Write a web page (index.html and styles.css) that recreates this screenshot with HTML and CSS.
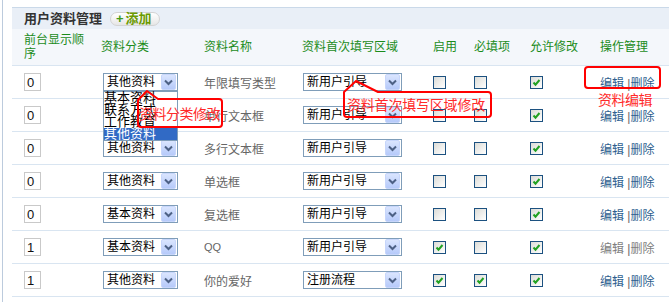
FILE: index.html
```html
<!DOCTYPE html>
<html lang="zh-CN">
<head>
<meta charset="UTF-8" />
<title>用户资料管理</title>
<link rel="stylesheet" href="styles.css">
</head>
<body>
<div class="page">
  <div class="panel">
    <div class="panel-head">
      <span class="panel-title">用户资料管理</span>
      <a class="btn-add" href="#"><span class="plus">+</span>添加</a>
    </div>
    <table class="grid">
      <colgroup>
        <col style="width:89px"><col style="width:103px"><col style="width:98px"><col style="width:131px">
        <col style="width:41px"><col style="width:56px"><col style="width:70px"><col style="width:69px">
      </colgroup>
      <thead>
        <tr>
          <th class="c-ord">前台显示顺序</th>
          <th>资料分类</th>
          <th>资料名称</th>
          <th>资料首次填写区域</th>
          <th>启用</th>
          <th>必填项</th>
          <th>允许修改</th>
          <th>操作管理</th>
        </tr>
      </thead>
      <tbody>
        <tr>
          <td class="c-ord"><input class="ord" type="text" value="0"></td>
          <td>
            <span class="sel sel-cat open">
              <span class="sel-text">其他资料</span>
              <span class="sel-btn"><svg width="15" height="16" viewBox="0 0 15 16"><path d="M4 6.5l3.5 3.5 3.5-3.5" /></svg></span>
              <ul class="drop">
                <li>基本资料</li>
                <li>联系方式</li>
                <li>工作教育</li>
                <li class="cur">其他资料</li>
              </ul>
            </span>
          </td>
          <td class="name">年限填写类型</td>
          <td><span class="sel sel-area"><span class="sel-text">新用户引导</span><span class="sel-btn"><svg width="15" height="16" viewBox="0 0 15 16"><path d="M4 6.5l3.5 3.5 3.5-3.5" /></svg></span></span></td>
          <td><span class="cb"></span></td>
          <td><span class="cb"></span></td>
          <td><span class="cb"><svg width="11" height="11" viewBox="0 0 11 11"><path d="M2.5 5.5l2 2.2 4-4.7" /></svg></span></td>
          <td class="ops"><a href="#">编辑</a> |<a href="#">删除</a></td>
        </tr>
        <tr>
          <td class="c-ord"><input class="ord" type="text" value="0"></td>
          <td><span class="sel sel-cat"><span class="sel-text">其他资料</span><span class="sel-btn"><svg width="15" height="16" viewBox="0 0 15 16"><path d="M4 6.5l3.5 3.5 3.5-3.5" /></svg></span></span></td>
          <td class="name">单行文本框</td>
          <td><span class="sel sel-area"><span class="sel-text">新用户引导</span><span class="sel-btn"><svg width="15" height="16" viewBox="0 0 15 16"><path d="M4 6.5l3.5 3.5 3.5-3.5" /></svg></span></span></td>
          <td><span class="cb"></span></td>
          <td><span class="cb"></span></td>
          <td><span class="cb"><svg width="11" height="11" viewBox="0 0 11 11"><path d="M2.5 5.5l2 2.2 4-4.7" /></svg></span></td>
          <td class="ops"><a href="#">编辑</a> |<a href="#">删除</a></td>
        </tr>
        <tr>
          <td class="c-ord"><input class="ord" type="text" value="0"></td>
          <td><span class="sel sel-cat"><span class="sel-text">其他资料</span><span class="sel-btn"><svg width="15" height="16" viewBox="0 0 15 16"><path d="M4 6.5l3.5 3.5 3.5-3.5" /></svg></span></span></td>
          <td class="name">多行文本框</td>
          <td><span class="sel sel-area"><span class="sel-text">新用户引导</span><span class="sel-btn"><svg width="15" height="16" viewBox="0 0 15 16"><path d="M4 6.5l3.5 3.5 3.5-3.5" /></svg></span></span></td>
          <td><span class="cb"></span></td>
          <td><span class="cb"></span></td>
          <td><span class="cb"><svg width="11" height="11" viewBox="0 0 11 11"><path d="M2.5 5.5l2 2.2 4-4.7" /></svg></span></td>
          <td class="ops"><a href="#">编辑</a> |<a href="#">删除</a></td>
        </tr>
        <tr>
          <td class="c-ord"><input class="ord" type="text" value="0"></td>
          <td><span class="sel sel-cat"><span class="sel-text">其他资料</span><span class="sel-btn"><svg width="15" height="16" viewBox="0 0 15 16"><path d="M4 6.5l3.5 3.5 3.5-3.5" /></svg></span></span></td>
          <td class="name">单选框</td>
          <td><span class="sel sel-area"><span class="sel-text">新用户引导</span><span class="sel-btn"><svg width="15" height="16" viewBox="0 0 15 16"><path d="M4 6.5l3.5 3.5 3.5-3.5" /></svg></span></span></td>
          <td><span class="cb"></span></td>
          <td><span class="cb"></span></td>
          <td><span class="cb"><svg width="11" height="11" viewBox="0 0 11 11"><path d="M2.5 5.5l2 2.2 4-4.7" /></svg></span></td>
          <td class="ops"><a href="#">编辑</a> |<a href="#">删除</a></td>
        </tr>
        <tr>
          <td class="c-ord"><input class="ord" type="text" value="0"></td>
          <td><span class="sel sel-cat"><span class="sel-text">基本资料</span><span class="sel-btn"><svg width="15" height="16" viewBox="0 0 15 16"><path d="M4 6.5l3.5 3.5 3.5-3.5" /></svg></span></span></td>
          <td class="name">复选框</td>
          <td><span class="sel sel-area"><span class="sel-text">新用户引导</span><span class="sel-btn"><svg width="15" height="16" viewBox="0 0 15 16"><path d="M4 6.5l3.5 3.5 3.5-3.5" /></svg></span></span></td>
          <td><span class="cb"></span></td>
          <td><span class="cb"></span></td>
          <td><span class="cb"><svg width="11" height="11" viewBox="0 0 11 11"><path d="M2.5 5.5l2 2.2 4-4.7" /></svg></span></td>
          <td class="ops"><a href="#">编辑</a> |<a href="#">删除</a></td>
        </tr>
        <tr>
          <td class="c-ord"><input class="ord" type="text" value="1"></td>
          <td><span class="sel sel-cat"><span class="sel-text">基本资料</span><span class="sel-btn"><svg width="15" height="16" viewBox="0 0 15 16"><path d="M4 6.5l3.5 3.5 3.5-3.5" /></svg></span></span></td>
          <td class="name name-qq">QQ</td>
          <td><span class="sel sel-area"><span class="sel-text">新用户引导</span><span class="sel-btn"><svg width="15" height="16" viewBox="0 0 15 16"><path d="M4 6.5l3.5 3.5 3.5-3.5" /></svg></span></span></td>
          <td><span class="cb"><svg width="11" height="11" viewBox="0 0 11 11"><path d="M2.5 5.5l2 2.2 4-4.7" /></svg></span></td>
          <td><span class="cb"></span></td>
          <td><span class="cb"><svg width="11" height="11" viewBox="0 0 11 11"><path d="M2.5 5.5l2 2.2 4-4.7" /></svg></span></td>
          <td class="ops ops-off"><a href="#">编辑</a> |<a href="#">删除</a></td>
        </tr>
        <tr>
          <td class="c-ord"><input class="ord" type="text" value="1"></td>
          <td><span class="sel sel-cat"><span class="sel-text">其他资料</span><span class="sel-btn"><svg width="15" height="16" viewBox="0 0 15 16"><path d="M4 6.5l3.5 3.5 3.5-3.5" /></svg></span></span></td>
          <td class="name">你的爱好</td>
          <td><span class="sel sel-area"><span class="sel-text">注册流程</span><span class="sel-btn"><svg width="15" height="16" viewBox="0 0 15 16"><path d="M4 6.5l3.5 3.5 3.5-3.5" /></svg></span></span></td>
          <td><span class="cb"><svg width="11" height="11" viewBox="0 0 11 11"><path d="M2.5 5.5l2 2.2 4-4.7" /></svg></span></td>
          <td><span class="cb"><svg width="11" height="11" viewBox="0 0 11 11"><path d="M2.5 5.5l2 2.2 4-4.7" /></svg></span></td>
          <td><span class="cb"><svg width="11" height="11" viewBox="0 0 11 11"><path d="M2.5 5.5l2 2.2 4-4.7" /></svg></span></td>
          <td class="ops"><a href="#">编辑</a> |<a href="#">删除</a></td>
        </tr>
      </tbody>
    </table>
  </div>
</div>

<!-- red annotation callouts drawn over the screenshot -->
<div class="notes">
  <svg class="note-lines" width="669" height="302" viewBox="0 0 669 302">
    <path d="M138 124V100L147 91L158 99H219Q222 99 222 102V124Q222 127 219 127H141Q138 127 138 124Z" />
    <path d="M344 114V92L356 81L378 92H488Q491 92 491 95V114Q491 117 488 117H347Q344 117 344 114Z" />
    <rect x="585" y="67" width="75" height="21" rx="3" />
  </svg>
  <div class="note note-cat">资料分类修改</div>
  <div class="note note-area">资料首次填写区域修改</div>
  <div class="note note-edit">资料编辑</div>
</div>
</body>
</html>
```

FILE: styles.css
```css
/* Reset */
* {
  box-sizing: border-box;
}

body {
  margin: 0;
  position: relative;
  width: 669px;
  height: 302px;
  overflow: hidden;
  background: #fff;
  color: #000;
  font-family: "Liberation Sans", "Noto Sans CJK SC", sans-serif;
  font-size: 12px;
}

.page {
  height: 302px;
  margin-left: 2px;
  border-left: 1px solid #bccbdd;
  padding: 7px 0 0 9px;
}

.panel {
  border-top: 1px solid #cad9e9;
}

.panel-head {
  display: flex;
  align-items: center;
  gap: 8px;
  height: 21px;
  padding-left: 12px;
  background: #e9eff7;
}

.panel-title {
  font-size: 13px;
  font-weight: bold;
  color: #333;
  line-height: 21px;
}

.btn-add {
  display: flex;
  align-items: center;
  gap: 2px;
  height: 14px;
  margin-top: 1px;
  padding: 0 7px 0 5px;
  border: 1px solid #d3d3d3;
  border-radius: 7px;
  background: linear-gradient(#ffffff, #e6e6e6);
  color: #6a9a00;
  font-size: 13px;
  font-weight: bold;
  line-height: 12px;
  text-decoration: none;
}

.btn-add .plus {
  color: #3f9a1c;
  font-family: "Liberation Sans", sans-serif;
  font-size: 13px;
}

/* Grid */
.grid {
  width: 657px;
  table-layout: fixed;
  border-collapse: separate;
  border-spacing: 0;
}

.grid th,
.grid td {
  padding: 0;
  text-align: left;
  vertical-align: middle;
  border-bottom: 1px solid #d9e5f1;
}

.grid th {
  height: 37px;
  background: #f4f7fb;
  color: #1b8c1b;
  font-weight: normal;
  line-height: 14px;
}

.grid td {
  height: 33px;
}

.grid .c-ord {
  padding-left: 12px;
  padding-right: 14px;
}

.ord {
  display: block;
  width: 17px;
  height: 18px;
  margin: 0;
  padding: 0 0 0 2px;
  border: 1px solid #c9c9c9;
  background: #fff;
  color: #111;
  font-family: "Liberation Sans", sans-serif;
  font-size: 13px;
  outline: none;
}

/* fake XP select */
.sel {
  position: relative;
  display: flex;
  align-items: center;
  height: 18px;
  padding: 0 1px 0 3px;
  border: 1px solid #7f9db9;
  background: #fff;
  font-size: 12px;
}

.sel-cat {
  width: 75px;
  margin-left: 2px;
}

.sel-area {
  width: 99px;
  margin-left: 1px;
}

.sel-text {
  flex: 1;
  line-height: 16px;
  white-space: nowrap;
}

.sel-btn {
  display: block;
  width: 15px;
  height: 16px;
  border: 1px solid #c7d6fb;
  border-radius: 2px;
  background: linear-gradient(#dae5fe, #b6cafa);
}

.sel-btn svg {
  display: block;
  margin: -1px 0 0 -1px;
}

.sel-btn path {
  fill: none;
  stroke: #4d6185;
  stroke-width: 2;
}

.drop {
  position: absolute;
  z-index: 5;
  left: -1px;
  top: 17px;
  width: 75px;
  margin: 0;
  padding: 0;
  list-style: none;
  border: 1px solid #7f9db9;
  background: #fff;
}

.drop li {
  height: 12px;
  padding-left: 0;
  font-size: 13px;
  line-height: 12px;
  white-space: nowrap;
}

.drop li.cur {
  background: #316ac5;
  color: #fff;
}

.name {
  color: #666;
}

.name-qq {
  font-size: 11px;
}

/* XP checkbox */
.cb {
  display: block;
  width: 13px;
  height: 13px;
  border: 1px solid #1c5180;
  background: linear-gradient(135deg, #dcdcd7, #ffffff);
}

.cb svg {
  display: block;
}

.cb path {
  fill: none;
  stroke: #21a121;
  stroke-width: 2;
}

.ops {
  color: #666;
}

.ops a {
  color: #2f5f8f;
  text-decoration: none;
}

.ops-off a {
  color: #808080;
}

/* annotations */
.notes {
  position: absolute;
  left: 0;
  top: 0;
  width: 669px;
  height: 302px;
  z-index: 10;
  pointer-events: none;
}

.note-lines {
  position: absolute;
  left: 0;
  top: 0;
}

.note-lines path,
.note-lines rect {
  fill: none;
  stroke: #ff0000;
  stroke-width: 2;
  stroke-linejoin: round;
}

.note {
  position: absolute;
  color: #ff2a2a;
  font-size: 14px;
  line-height: 16px;
  white-space: nowrap;
}

.note-cat {
  left: 139px;
  top: 106px;
  letter-spacing: -0.5px;
}

.note-area {
  left: 347px;
  top: 97px;
  letter-spacing: -0.2px;
}

.note-edit {
  left: 598px;
  top: 92px;
  letter-spacing: -0.5px;
}
```
